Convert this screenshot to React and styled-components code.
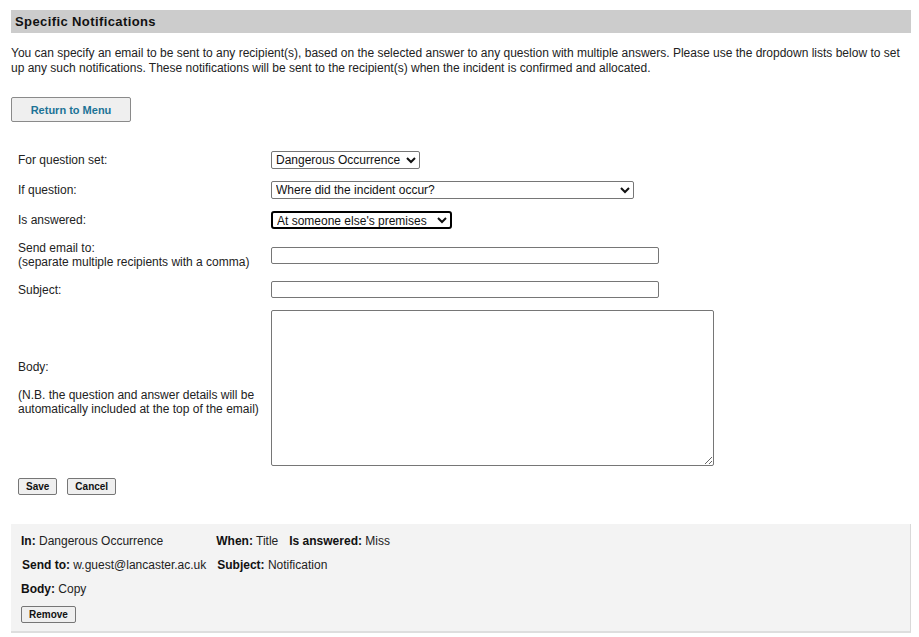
import React from "react";
import styled, { createGlobalStyle } from "styled-components";

const Global = createGlobalStyle`
  html, body { margin: 0; padding: 0; background: #fff; }
  body { font-family: "Liberation Sans", Arial, sans-serif; font-size: 12px; color: #222; }
`;

const Page = styled.div`
  padding: 10px 8px 0 11px;
  width: 900px;
`;

const TitleBar = styled.h1`
  margin: 0;
  height: 23px;
  line-height: 23px;
  background: #cccccc;
  padding-left: 4px;
  font-size: 13px;
  font-weight: bold;
  letter-spacing: 0.4px;
  color: #111;
`;

const Intro = styled.p`
  margin: 13px 0 0;
  line-height: 15px;
  font-size: 12px;
  color: #222;
`;

const MenuButton = styled.button`
  margin-top: 21px;
  width: 120px;
  height: 25px;
  background: #efefef;
  border: 1px solid #8a8a8a;
  border-radius: 2px;
  font-family: "Liberation Sans", Arial, sans-serif;
  font-size: 11px;
  font-weight: bold;
  color: #1c7396;
  cursor: pointer;
`;

const Form = styled.div`
  margin-top: 29px;
  padding-left: 7px;
  display: grid;
  grid-template-columns: 253px auto;
  row-gap: 12px;
  align-items: center;
  justify-items: start;
`;

const Label = styled.div`
  line-height: 14px;
  font-size: 12px;
  color: #222;
`;

const Select = styled.select`
  width: ${(p) => p.$w}px;
  height: 18px;
  padding: 0;
  font-family: "Liberation Sans", Arial, sans-serif;
  font-size: 12px;
  color: #111;
  background: #fff;
  border: ${(p) => (p.$focus ? "2px solid #000" : "1px solid #767676")};
  border-radius: ${(p) => (p.$focus ? "3px" : "2px")};
  outline: none;
`;

const TextInput = styled.input`
  box-sizing: border-box;
  width: 388px;
  height: 17px;
  border: 1px solid #767676;
  border-radius: 2px;
  padding: 0 2px;
  font-family: "Liberation Sans", Arial, sans-serif;
  font-size: 12px;
`;

const BodyArea = styled.textarea`
  box-sizing: border-box;
  width: 443px;
  height: 156px;
  border: 1px solid #767676;
  border-radius: 2px;
  font-family: "Liberation Sans", Arial, sans-serif;
  font-size: 12px;
`;

const Actions = styled.div`
  margin-top: 12px;
  padding-left: 7px;
  display: flex;
  gap: 10px;
`;

const SmallButton = styled.button`
  height: 17px;
  padding: 0 ${(p) => p.$pad || 7}px;
  background: #efefef;
  border: 1px solid #767676;
  border-radius: 2px;
  font-family: "Liberation Sans", Arial, sans-serif;
  font-size: 10px;
  font-weight: bold;
  color: #111;
  cursor: pointer;
  line-height: 15px;
`;

const Panel = styled.div`
  margin-top: 29px;
  background: #f3f3f3;
  border-right: 1px solid #d9d9d9;
  border-bottom: 2px solid #dedede;
  padding: 10px 10px 8px 10px;
  display: flex;
  flex-direction: column;
  gap: 10px;
  align-items: flex-start;
`;

const SummaryGrid = styled.div`
  display: grid;
  grid-template-columns: auto auto 1fr;
  column-gap: 10px;
  row-gap: 10px;
  line-height: 14px;
  font-size: 12px;
  color: #222;
`;

const Cell = styled.div`
  white-space: nowrap;
  grid-column: ${(p) => p.$span || "auto"};
  padding-left: ${(p) => p.$indent || 0}px;
  b { font-weight: bold; color: #111; }
`;

export default function App() {
  return (
    <>
      <Global />
      <Page>
        <TitleBar>Specific Notifications</TitleBar>
        <Intro>
          You can specify an email to be sent to any recipient(s), based on the selected answer to any question with multiple answers. Please use the dropdown lists below to set up any such notifications. These notifications will be sent to the recipient(s) when the incident is confirmed and allocated.
        </Intro>
        <MenuButton>Return to Menu</MenuButton>

        <Form>
          <Label>For question set:</Label>
          <Select $w={149} defaultValue="d">
            <option value="d">Dangerous Occurrence</option>
          </Select>

          <Label>If question:</Label>
          <Select $w={363} defaultValue="q">
            <option value="q">Where did the incident occur?</option>
          </Select>

          <Label>Is answered:</Label>
          <Select $w={181} $focus defaultValue="a">
            <option value="a">At someone else's premises</option>
          </Select>

          <Label>
            Send email to:
            <br />
            (separate multiple recipients with a comma)
          </Label>
          <TextInput type="text" />

          <Label>Subject:</Label>
          <TextInput type="text" />

          <Label>
            Body:
            <br />
            <br />
            (N.B. the question and answer details will be
            <br />
            automatically included at the top of the email)
          </Label>
          <BodyArea />
        </Form>

        <Actions>
          <SmallButton $pad={7}>Save</SmallButton>
          <SmallButton $pad={7}>Cancel</SmallButton>
        </Actions>

        <Panel>
          <SummaryGrid>
            <Cell><b>In:</b> Dangerous Occurrence</Cell>
            <Cell><b>When:</b> Title</Cell>
            <Cell $indent={1}><b>Is answered:</b> Miss</Cell>
            <Cell $indent={1}><b>Send to:</b> w.guest@lancaster.ac.uk</Cell>
            <Cell $span="2 / span 2" $indent={1}><b>Subject:</b> Notification</Cell>
            <Cell $span="1 / span 3"><b>Body:</b> Copy</Cell>
          </SummaryGrid>
          <SmallButton $pad={7}>Remove</SmallButton>
        </Panel>
      </Page>
    </>
  );
}
